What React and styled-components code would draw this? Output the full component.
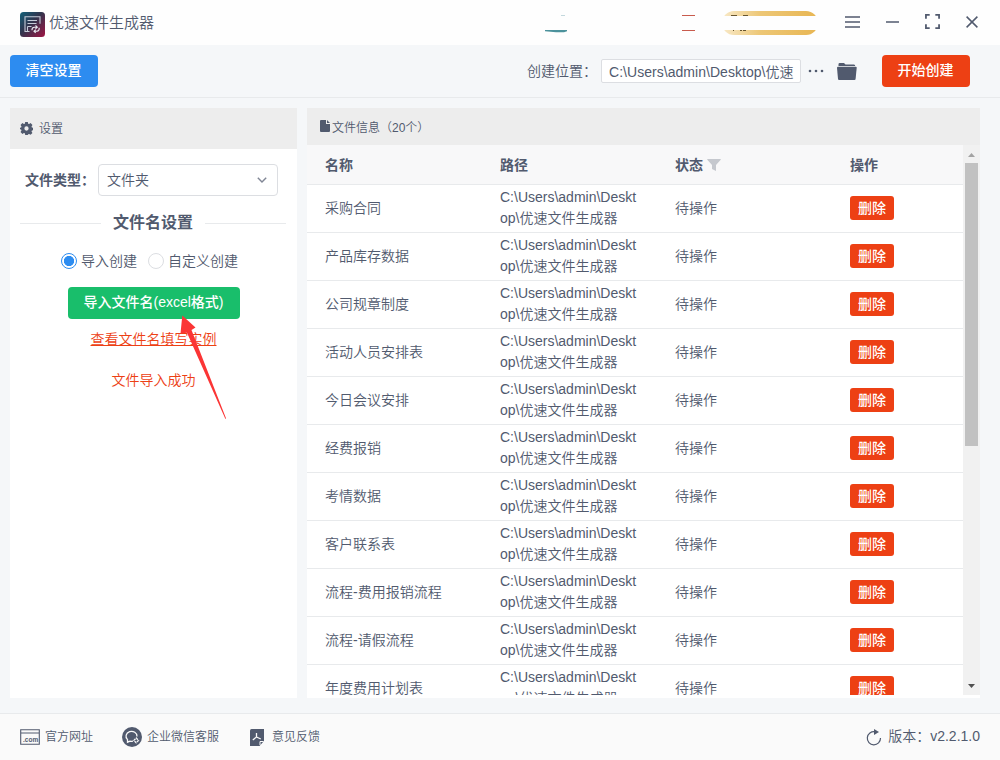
import styled, { createGlobalStyle } from 'styled-components'

const GlobalStyle = createGlobalStyle`
  * {
    box-sizing: border-box;
  }

  body {
    margin: 0;
    overflow: hidden;
    color: #515a6e;
    font-family: 'Liberation Sans', 'Noto Sans CJK SC', sans-serif;
    font-size: 14px;
    font-weight: 350;
  }

  svg {
    display: block;
    flex: none;
  }
`

const Window = styled.div`
  display: flex;
  flex-direction: column;
  width: 1000px;
  height: 760px;
  background: #f5f7f9;
`

const TitleBar = styled.header`
  display: flex;
  align-items: center;
  height: 45px;
  padding: 4px 22px 0 20px;
  background: #fefefe;
`

const AppName = styled.h1`
  flex: 1;
  margin: 0;
  padding: 0 0 3px 4px;
  font-size: 15px;
  font-weight: 350;
  line-height: 20px;
`

const WindowButtons = styled.div`
  display: flex;
  align-items: center;
  gap: 26px;
  margin: 0 0 6px 25px;
`

const Toolbar = styled.div`
  display: flex;
  align-items: center;
  justify-content: space-between;
  height: 53px;
  padding: 0 30px 0 10px;
  border-bottom: 1px solid #e8eaec;
`

const Location = styled.div`
  display: flex;
  align-items: center;
`

const Text = styled.span`
  padding-bottom: ${({ $lift }) => $lift}px;
`

const Button = styled.button`
  height: 32px;
  padding: 0 1px 4px 0;
  width: ${({ $width }) => $width}px;
  border: none;
  border-radius: 4px;
  background: ${({ $color }) => $color};
  color: #fff;
  font: 500 14px 'Liberation Sans', 'Noto Sans CJK SC', sans-serif;
  white-space: nowrap;
`

const PathBox = styled.div`
  width: 200px;
  height: 24px;
  margin: 0 7px 0 4px;
  padding-left: 7px;
  border: 1px solid #dcdee2;
  border-radius: 2px;
  background: #fff;
  line-height: 24px;
  letter-spacing: 0.04px;
  white-space: nowrap;
  overflow: hidden;
`

const FolderIcon = styled.svg`
  margin: 0 25px 0 13px;
`

const Main = styled.main`
  display: flex;
  gap: 10px;
  flex: 1;
  padding: 10px 20px 15px 10px;
`

const Panel = styled.section`
  display: flex;
  flex-direction: column;
  width: ${({ $width }) => $width}px;
  height: 590px;
  background: #fff;
`

const PanelHead = styled.div`
  display: flex;
  flex: none;
  align-items: center;
  gap: ${({ $gap }) => $gap}px;
  height: ${({ $height }) => $height}px;
  padding: 0 ${({ $pad }) => $pad}px 1px;
  background: #ededed;
  font-size: 12px;
`

const Settings = styled.div`
  display: flex;
  flex-direction: column;
  align-items: center;
  padding: 15px 11px 0 10px;
`

const Field = styled.div`
  display: flex;
  align-items: center;
  align-self: stretch;
  padding-left: 5px;
`

const Label = styled.label`
  width: 73px;
  padding-bottom: 2px;
  font-weight: 700;
  white-space: nowrap;
`

const Select = styled.div`
  display: flex;
  align-items: center;
  justify-content: space-between;
  width: 180px;
  height: 32px;
  padding: 0 10px 0 8px;
  border: 1px solid #dcdee2;
  border-radius: 4px;
`

const Divider = styled.div`
  display: flex;
  align-items: center;
  align-self: stretch;
  gap: 12px;
  height: 24px;
  margin-top: 15px;
  font-size: 16px;
  font-weight: 700;

  &::before,
  &::after {
    content: '';
    flex: 1;
    height: 1px;
    background: #e8eaec;
  }
`

const RadioGroup = styled.div`
  display: flex;
  gap: 11px;
  height: 20px;
  margin: 16px 7px 16px 0;
`

const Radio = styled.div`
  display: flex;
  align-items: center;
  gap: 4px;
`

const Dot = styled.span`
  width: 16px;
  height: 16px;
  border: 1px solid ${({ $checked }) => ($checked ? '#2d8cf0' : '#dcdee2')};
  border-radius: 50%;
  background: ${({ $checked }) => ($checked ? 'radial-gradient(circle, #2d8cf0 4.8px, #fff 5.4px)' : '#fff')};
`

const ImportArea = styled.div`
  position: relative;
  display: flex;
  flex-direction: column;
  align-items: center;
  margin-left: 2px;
`

const Arrow = styled.svg`
  position: absolute;
  left: 112px;
  top: 28px;
`

const Message = styled.span`
  margin-top: ${({ $top }) => $top}px;
  padding-right: 1px;
  color: #ed4014;
  line-height: 20px;
  text-decoration: ${({ $link }) => ($link ? 'underline' : 'none')};
`

const TableArea = styled.div`
  display: flex;
  height: 550px;
`

const Table = styled.div`
  width: 656px;
  height: 550px;
  overflow: hidden;
`

const Row = styled.div`
  display: grid;
  grid-template-columns: 175px 175px 175px 131px;
  align-items: center;
  height: ${({ $head }) => ($head ? 40 : 48)}px;
  border-bottom: 1px solid #e8eaec;
  background: ${({ $head }) => ($head ? '#f8f8f9' : '#fff')};
  font-weight: ${({ $head }) => ($head ? 700 : 350)};
`

const Cell = styled.div`
  display: flex;
  align-items: center;
  gap: 4px;
  padding: ${({ $top }) => $top || 0}px 18px ${({ $bottom }) => $bottom || 0}px;
  line-height: 21px;
  word-break: break-all;
`

const DeleteButton = styled.button`
  width: 44px;
  height: 24px;
  padding: 0 0 2px;
  border: none;
  border-radius: 3px;
  background: #ed4014;
  color: #fff;
  font: 500 14px 'Noto Sans CJK SC', sans-serif;
  line-height: 21px;
`

const Scrollbar = styled.div`
  display: flex;
  flex-direction: column;
  align-items: center;
  width: 17px;
  background: #f1f1f1;
`

const Thumb = styled.div`
  width: 13px;
  height: 283px;
  margin: 1px 0 auto;
  background: #c1c1c1;
`

const ScrollArrow = styled.svg`
  width: 17px;
  height: 17px;
  fill: ${({ $color }) => $color};
`

const Footer = styled.footer`
  display: flex;
  align-items: center;
  height: 47px;
  padding: 0 20px;
  border-top: 1px solid #e8eaec;
  background: #fafafa;
  font-size: 12px;
`

const FooterItem = styled.div`
  display: flex;
  align-items: center;
  gap: ${({ $gap }) => $gap}px;
  margin-right: ${({ $space }) => $space || 0}px;
`

const Version = styled.div`
  display: flex;
  align-items: center;
  gap: 6px;
  margin-left: auto;
  font-size: 14px;
`

const files = [
  '采购合同',
  '产品库存数据',
  '公司规章制度',
  '活动人员安排表',
  '今日会议安排',
  '经费报销',
  '考情数据',
  '客户联系表',
  '流程-费用报销流程',
  '流程-请假流程',
  '年度费用计划表',
]

const Logo = () => (
  <svg width='25' height='25' viewBox='0 0 25 25' fill='none'>
    <defs>
      <linearGradient id='logo' x1='0' y1='0' x2='1' y2='1'>
        <stop offset='0' stopColor='#12617a' />
        <stop offset='.45' stopColor='#32344d' />
        <stop offset='1' stopColor='#a01443' />
      </linearGradient>
    </defs>
    <rect width='25' height='25' rx='3.5' fill='url(#logo)' />
    <path d='M9.500 19.500H5V4.800h15v7M7.500 8.500h9.500M7.500 11.500h9M7.500 14.500h4M7.500 14.500v5' stroke='#c5cbd8' strokeWidth='1.100' />
    <path d='M12 18.200q-.3-2.700 2.400-3h2.300M15.500 13.500l1.800 1.700-1.800 1.700M19.200 15.800q.4 3.100-2.300 3.500h-2.400M15.700 17.700l-1.700 1.600 1.700 1.600' stroke='#e8eaf0' strokeWidth='1.100' />
  </svg>
)

const Promo = () => (
  <svg width='276' height='32' viewBox='544 9 276 32'>
    <defs>
      <linearGradient id='gold'>
        <stop offset='0' stopColor='#f8e9c8' />
        <stop offset='.4' stopColor='#edc776' />
        <stop offset='1' stopColor='#e8b653' />
      </linearGradient>
    </defs>
    <path d='M561 15.500h4' stroke='#a9c7ce' strokeWidth='.7' />
    <path d='M545 30h22v1.300l-3 1h-8l-11-1z' fill='#4c929c' />
    <path d='M682 15.500h13M682 30.500h13' stroke='#c85b4d' />
    <rect x='722' y='11' width='96' height='24' rx='12' fill='url(#gold)' />
    <path d='M731 15.500h6M743 15.500h5M733 30.500h1M740 30.500h2M743 30.500h3' stroke='#67552f' />
    <path d='M720 16h99v14h-99z' fill='#fefefe' />
  </svg>
)

const App = () => (
  <>
    <GlobalStyle />
    <Window>
      <TitleBar>
        <Logo />
        <AppName>优速文件生成器</AppName>
        <Promo />
        <WindowButtons>
          <svg width='15' height='12' viewBox='0 0 15 12' stroke='#515a6e' strokeWidth='1.600'>
            <path d='M0 1h15M0 6h15M0 11h15' />
          </svg>
          <svg width='13' height='14' viewBox='0 0 13 14' stroke='#515a6e' strokeWidth='1.500'>
            <path d='M0 7h13' />
          </svg>
          <svg width='15' height='15' viewBox='0 0 16 16' fill='none' stroke='#515a6e' strokeWidth='1.900'>
            <path d='M1 5V1h4M11 1h4v4M15 11v4h-4M5 15H1v-4' />
          </svg>
          <svg width='12' height='12' viewBox='0 0 12 12' stroke='#515a6e' strokeWidth='1.500'>
            <path d='M.6.6l10.800 10.800M11.400.6L.6 11.400' />
          </svg>
        </WindowButtons>
      </TitleBar>

      <Toolbar>
        <Button $width={88} $color='#2d8cf0'>清空设置</Button>
        <Location>
          <Text $lift={3}>创建位置：</Text>
          <PathBox>C:\Users\admin\Desktop\优速</PathBox>
          <svg width='16' height='4' viewBox='0 0 16 4' fill='#515a6e'>
            <circle cx='2' cy='2' r='1.300' />
            <circle cx='8' cy='2' r='1.300' />
            <circle cx='14' cy='2' r='1.300' />
          </svg>
          <FolderIcon width='20' height='17' viewBox='0 0 20 17' fill='#515a6e'>
            <path d='M1.500 3V1.200Q1.500 0 2.700 0H7l1.500 1.500H17q1.200 0 1.200 1.500z' />
            <path d='M0 4.800q0-1 1-1h17.700q1 0 1 1L18.600 16q-.1 1-1.100 1H2.100q-1 0-1.100-1z' />
          </FolderIcon>
          <Button $width={88} $color='#ed4014'>开始创建</Button>
        </Location>
      </Toolbar>

      <Main>
        <Panel $width={287}>
          <PanelHead $height={41} $gap={6} $pad={10}>
            <svg width='13' height='13' viewBox='0 0 14 14' fill='#515a6e'>
              <path fillRule='evenodd' d='M5.600 0h2.800l.4 1.800 1 .4 1.600-1 2 2-1 1.600.4 1 1.200.4v2.600l-1.200.4-.4 1 1 1.600-2 2-1.600-1-1 .4L8.400 14H5.600l-.4-1.800-1-.4-1.600 1-2-2 1-1.600-.4-1L0 7.800V6.200l1.200-.4.4-1-1-1.600 2-2 1.600 1 1-.4zM7 4.700a2.300 2.300 0 1 0 0 4.600 2.300 2.300 0 0 0 0-4.600z' />
            </svg>
            <Text $lift={2}>设置</Text>
          </PanelHead>
          <Settings>
            <Field>
              <Label>文件类型：</Label>
              <Select>
                <Text $lift={3}>文件夹</Text>
                <svg width='10' height='6' viewBox='0 0 10 6' fill='none' stroke='#808695' strokeWidth='1.400'>
                  <path d='M.8.700L5 5 9.200.7' />
                </svg>
              </Select>
            </Field>
            <Divider><Text $lift={4}>文件名设置</Text></Divider>
            <RadioGroup>
              <Radio><Dot $checked /><Text $lift={2}>导入创建</Text></Radio>
              <Radio><Dot /><Text $lift={2}>自定义创建</Text></Radio>
            </RadioGroup>
            <ImportArea>
              <Button $width={172} $color='#19be6b'>导入文件名(excel格式)</Button>
              <Message $top={10} $link>查看文件名填写实例</Message>
              <Message $top={21}>文件导入成功</Message>
              <Arrow width='48' height='106' viewBox='180 315 48 106'>
                <path d='M182.300 315.600l13.200 12-4 2.400 34.600 88.500-.8.300-38.300-86-6.500.8z' fill='#fb3535' />
              </Arrow>
            </ImportArea>
          </Settings>
        </Panel>

        <Panel $width={673}>
          <PanelHead $height={37} $gap={2} $pad={13}>
            <svg width='10' height='12' viewBox='0 0 10 12' fill='#515a6e'>
              <path d='M1 0h5v4h4v7q0 1-1 1H1q-1 0-1-1V1q0-1 1-1zM7 0l3 3H7z' />
            </svg>
            文件信息（20个）
          </PanelHead>
          <TableArea>
            <Table>
              <Row $head>
                <Cell $top={1}>名称</Cell>
                <Cell $top={1}>路径</Cell>
                <Cell $top={1}>
                  状态
                  <svg width='14' height='12' viewBox='0 0 14 12' fill='#c5c8ce'>
                    <path d='M.5 0h13q.6.4 0 1L9 6v6l-4-2V6L.5 1q-.6-.6 0-1z' />
                  </svg>
                </Cell>
                <Cell $top={1}>操作</Cell>
              </Row>
              {files.map((name) => (
                <Row key={name}>
                  <Cell>{name}</Cell>
                  <Cell $bottom={2}>C:\Users\admin\Desktop\优速文件生成器</Cell>
                  <Cell>待操作</Cell>
                  <Cell $bottom={1}><DeleteButton>删除</DeleteButton></Cell>
                </Row>
              ))}
            </Table>
            <Scrollbar>
              <ScrollArrow $color='#a3a3a3' viewBox='0 0 17 17'><path d='M5 12l3.500-4 3.500 4z' /></ScrollArrow>
              <Thumb />
              <ScrollArrow $color='#505050' viewBox='0 0 17 17'><path d='M5 6l3.500 4L12 6z' /></ScrollArrow>
            </Scrollbar>
          </TableArea>
        </Panel>
      </Main>

      <Footer>
        <FooterItem $gap={5} $space={29}>
          <svg width='20' height='16' viewBox='0 0 20 16' fill='none' stroke='#515a6e'>
            <path d='M.7.7h18.600v14.600H.7zM.7 4h18.600' strokeWidth='1.100' />
            <text x='3' y='13' fontSize='6.500' fontWeight='700' fill='#515a6e' stroke='none'>.com</text>
          </svg>
          <Text $lift={3}>官方网址</Text>
        </FooterItem>
        <FooterItem $gap={5} $space={31}>
          <svg width='20' height='20' viewBox='0 0 20 20'>
            <circle cx='10' cy='10' r='10' fill='#515a6e' />
            <path d='M11 14.200q-1.500.3-3-.1L5.500 15.200V12.600A5.500 4.900 0 1 1 15 9.500' fill='none' stroke='#fafafa' strokeWidth='1.300' />
            <path d='M14.200 11l2.300 2.400-2.300 2.400-2.300-2.400z' fill='none' stroke='#fafafa' strokeWidth='1.300' strokeDasharray='2.400 .9' />
          </svg>
          <Text $lift={3}>企业微信客服</Text>
        </FooterItem>
        <FooterItem $gap={8}>
          <svg width='14' height='17' viewBox='0 0 14 17'>
            <path d='M1.500 0H14v12l-4.500 5H0V1.500Q0 0 1.500 0z' fill='#515a6e' />
            <path d='M6.500 4v4l-3.700 3M6.500 8l4.300 2' fill='none' stroke='#fafafa' strokeWidth='1.300' />
            <path d='M10 16v-3.500h3.600' fill='none' stroke='#fafafa' />
          </svg>
          <Text $lift={3}>意见反馈</Text>
        </FooterItem>
        <Version>
          <svg width='16' height='17' viewBox='0 0 16 17'>
            <path d='M9 2.700A6.600 6.600 0 1 0 14.500 9' fill='none' stroke='#515a6e' strokeWidth='1.200' />
            <path d='M8 0l5 3-5 3z' fill='#515a6e' />
          </svg>
          <Text $lift={4}>版本：v2.2.1.0</Text>
        </Version>
      </Footer>
    </Window>
  </>
)

export default App
